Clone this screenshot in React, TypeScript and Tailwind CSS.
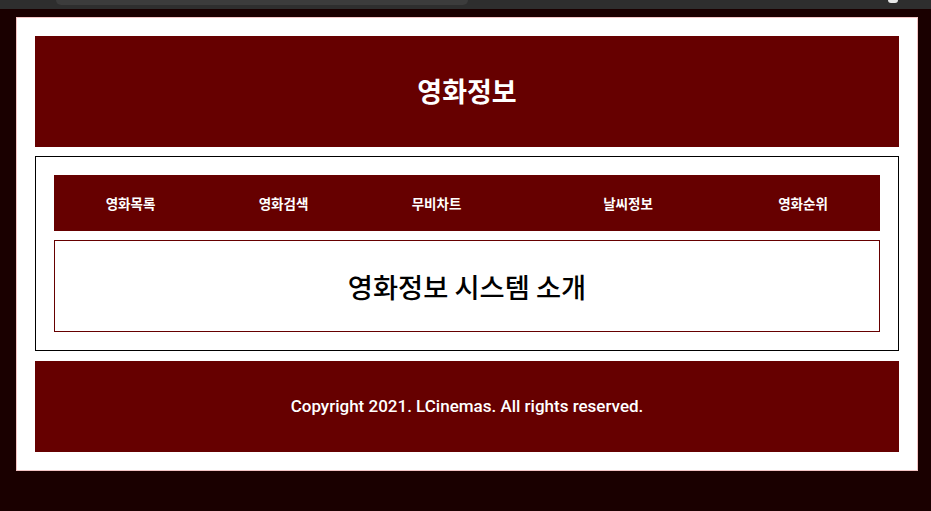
const MENU = ["영화목록", "영화검색", "무비차트", "날씨정보", "영화순위"]

export default function App() {
  return (
    <div
      className="h-screen overflow-hidden bg-[#1a0000]"
      style={{ fontFamily: '"Noto Sans CJK KR", "Noto Sans", sans-serif' }}
    >
      {/* browser strip */}
      <div className="relative h-[9px] bg-[#2e2e2e]">
        <div className="ml-[56px] h-[5px] w-[412px] rounded-b-lg bg-[#3c3c3c]" />
        <div className="absolute right-[33px] top-0 h-[3px] w-[10px] rounded-b-full bg-[#e8e8e8]" />
      </div>

      <div className="ml-4 mt-2 w-[902px] border border-[#f3c4c4] bg-white p-[18px]">
        <header className="flex h-[111px] items-center justify-center bg-[#660000]">
          <h1 className="text-[27px] font-bold text-white">영화정보</h1>
        </header>

        <section className="mt-[9px] border border-black p-[18px]">
          <nav className="grid h-[56px] grid-cols-[153px_153px_153px_230px_120px_1fr] items-center bg-[#660000]">
            {MENU.map((item) => (
              <a key={item} className="text-center text-[13.5px] font-bold text-white">
                {item}
              </a>
            ))}
          </nav>
          <div className="mt-[9px] flex h-[92px] items-center justify-center border border-[#660000]">
            <h2 className="text-[27.3px] font-medium text-black">영화정보 시스템 소개</h2>
          </div>
        </section>

        <footer className="mt-[10px] flex h-[91px] items-center justify-center bg-[#660000]">
          <p className="font-['Roboto'] text-[17px] font-medium text-white">
            Copyright 2021. LCinemas. All rights reserved.
          </p>
        </footer>
      </div>
    </div>
  )
}
